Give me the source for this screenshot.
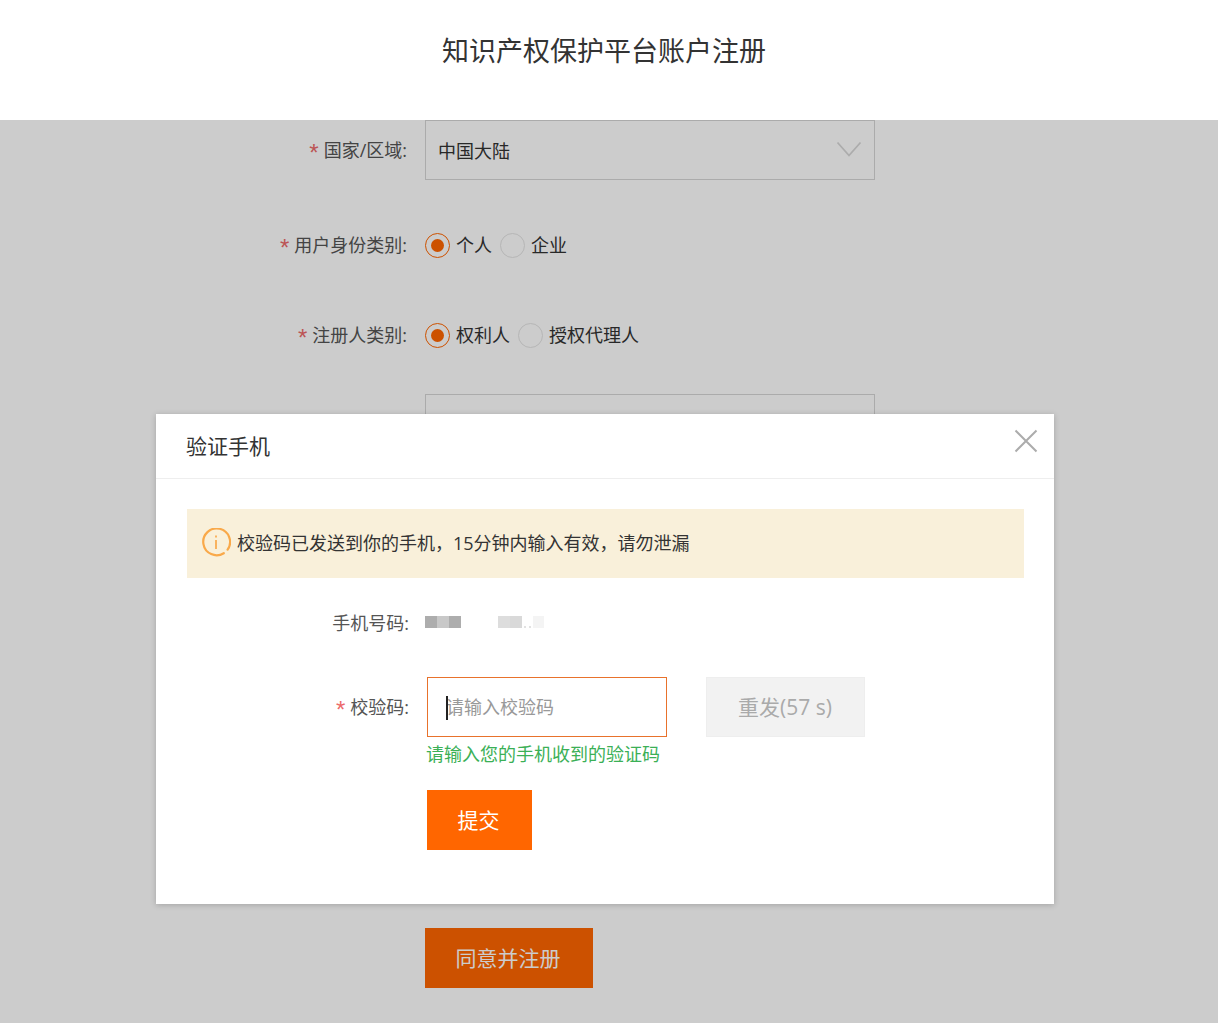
<div class="page">
  <header class="top"><h1>知识产权保护平台账户注册</h1></header>

  <form class="form">
    <div class="row">
      <div class="label"><i>*</i>国家/区域:</div>
      <div class="select">
        <span>中国大陆</span>
        <svg width="26" height="16" viewBox="0 0 26 16" fill="none"><path d="M1.5 1.5 13 14.5 24.5 1.5" stroke="#d8d8d8" stroke-width="1.8"/></svg>
      </div>
    </div>
    <div class="row second">
      <div class="label"><i>*</i>用户身份类别:</div>
      <div class="radios">
        <span class="radio on"></span><span class="opt">个人</span>
        <span class="radio"></span><span class="opt">企业</span>
      </div>
    </div>
    <div class="row">
      <div class="label"><i>*</i>注册人类别:</div>
      <div class="radios">
        <span class="radio on"></span><span class="opt">权利人</span>
        <span class="radio"></span><span class="opt">授权代理人</span>
      </div>
    </div>
    <div class="row fourth">
      <div class="label"></div>
      <div class="select"></div>
    </div>
    <div class="row agree">
      <div class="label"></div>
      <button type="button" class="agree-btn">同意并注册</button>
    </div>
  </form>

  <div class="mask"></div>

  <section class="modal">
    <div class="modal-head">
      <h2>验证手机</h2>
      <svg class="close" width="24" height="24" viewBox="0 0 24 24" fill="none"><path d="M1.5 1.5 22.5 22.5M22.5 1.5 1.5 22.5" stroke="#acacac" stroke-width="2"/></svg>
    </div>
    <div class="modal-body">
      <div class="alert">
        <svg width="30" height="30" viewBox="0 0 30 30" fill="none">
          <path d="M22.8 25.2A13.4 13.4 0 1 1 26.6 21.6" stroke="#f9a94a" stroke-width="2.2" stroke-linecap="round"/>
          <path d="M15 12V21M15 7.5V9.5" stroke="#f9a94a" stroke-width="1.7"/>
        </svg>
        <span>校验码已发送到你的手机，15分钟内输入有效，请勿泄漏</span>
      </div>

      <div class="m-row phone">
        <div class="m-label">手机号码:</div>
        <svg class="blur" width="120" height="12" viewBox="0 0 120 12">
          <rect x="0" width="12" height="12" fill="#adadad"/>
          <rect x="12" width="12" height="12" fill="#c8c8c8"/>
          <rect x="24" width="12" height="12" fill="#adadad"/>
          <rect x="73" width="12" height="12" fill="#dddddd"/>
          <rect x="85" width="12" height="12" fill="#d9d9d9"/>
          <rect x="99" y="10" width="2" height="2" fill="#e2e2e2"/>
          <rect x="104" y="10" width="2" height="2" fill="#e2e2e2"/>
          <rect x="108" width="11" height="12" fill="#f4f4f4"/>
        </svg>
      </div>

      <div class="m-row code">
        <div class="m-label"><i>*</i>校验码:</div>
        <div class="input"><b class="caret"></b>请输入校验码</div>
        <div class="resend">重发(57 s)</div>
      </div>
      <div class="hint">请输入您的手机收到的验证码</div>
      <button type="button" class="submit">提交</button>
    </div>
  </section>
</div>

<style>
  :global(body) {
    margin: 0;
    background: #fff;
  }
  .page {
    position: relative;
    height: 1023px;
    overflow: hidden;
    font-family: "Open Sans", "Noto Sans CJK SC", sans-serif;
    font-size: 18px;
    font-weight: 400;
    color: #333;
  }
  .top {
    height: 120px;
    position: relative;
    z-index: 2;
    background: #fff;
    padding-right: 10px;
    box-sizing: border-box;
  }
  h1 {
    margin: 0;
    padding-top: 31px;
    font-size: 27px;
    line-height: 40px;
    font-weight: 400;
    text-align: center;
  }
  .row {
    display: flex;
    align-items: center;
    gap: 17px;
    min-height: 60px;
    margin-bottom: 30px;
  }
  .row.second {
    margin-top: 35px;
  }
  .row.fourth {
    margin-top: -1px;
  }
  .row.agree {
    margin-top: 474px;
  }
  .label {
    box-sizing: border-box;
    width: 408px;
    padding-right: 1px;
    line-height: 24px;
    text-align: right;
    color: #555;
  }
  i {
    font-family: "Liberation Sans", sans-serif;
    font-style: normal;
    font-size: 24px;
    line-height: 20px;
    vertical-align: -4px;
    color: #ec6a6a;
    margin-right: 5px;
  }
  .select {
    box-sizing: border-box;
    width: 450px;
    height: 60px;
    border: 1px solid #d6d6d6;
    padding: 0 12px 0 12px;
    display: flex;
    align-items: center;
    justify-content: space-between;
  }
  .select svg {
    margin-top: -3px;
  }
  .radios {
    display: flex;
    align-items: center;
    line-height: 24px;
  }
  .radio {
    box-sizing: border-box;
    width: 25px;
    height: 25px;
    border-radius: 50%;
    border: 1px solid #e4e4e4;
    display: flex;
    align-items: center;
    justify-content: center;
  }
  .radio.on {
    border-color: #ff6600;
  }
  .radio.on::after {
    content: "";
    width: 13px;
    height: 13px;
    border-radius: 50%;
    background: #ff6600;
  }
  .opt {
    margin: 0 8px 0 6px;
  }
  .agree-btn {
    width: 168px;
    height: 60px;
    border: 0;
    padding: 0 2px 2px 0;
    background: #ff6600;
    color: #fff;
    font: inherit;
    font-size: 21px;
  }
  .mask {
    position: absolute;
    inset: 120px 0 0 0;
    background: rgba(0, 0, 0, 0.2);
  }
  .modal {
    position: absolute;
    left: 156px;
    top: 414px;
    width: 898px;
    height: 490px;
    background: #fff;
    box-shadow: 0 1px 6px rgba(0, 0, 0, 0.2);
  }
  .modal-head {
    position: relative;
    border-bottom: 1px solid #eee;
    padding: 16px 30px 0;
    height: 48px;
  }
  h2 {
    margin: 0;
    font-size: 21px;
    line-height: 32px;
    font-weight: 400;
  }
  .close {
    position: absolute;
    right: 16px;
    top: 15px;
  }
  .modal-body {
    padding: 30px 30px 0 31px;
  }
  .alert {
    height: 69px;
    background: #f9f0da;
    padding: 0 0 4px 14px;
    box-sizing: border-box;
    display: flex;
    align-items: center;
    gap: 6px;
  }
  .alert svg {
    margin-top: 3px;
  }
  .m-row {
    display: flex;
    align-items: center;
  }
  .m-label {
    width: 222px;
    line-height: 24px;
    text-align: right;
    color: #555;
  }
  .phone {
    margin-top: 33px;
    height: 24px;
  }
  .blur {
    margin-left: 16px;
    margin-top: -3px;
  }
  .code {
    margin-top: 42px;
  }
  .input {
    position: relative;
    box-sizing: border-box;
    width: 240px;
    height: 60px;
    margin-left: 18px;
    border: 1px solid #e8722c;
    padding: 0 0 2px 18px;
    display: flex;
    align-items: center;
    color: #999;
  }
  .caret {
    position: absolute;
    left: 18px;
    top: 18px;
    width: 2px;
    height: 24px;
    background: #222;
  }
  .resend {
    box-sizing: border-box;
    width: 159px;
    height: 60px;
    margin-left: 39px;
    padding: 0 1px 2px 0;
    background: #f2f2f2;
    border: 1px solid #eee;
    color: #aaa;
    font-size: 21px;
    display: flex;
    align-items: center;
    justify-content: center;
  }
  .hint {
    margin: 5px 0 0 239px;
    line-height: 24px;
    color: #3bb056;
  }
  .submit {
    display: block;
    width: 105px;
    height: 60px;
    margin: 24px 0 0 240px;
    border: 0;
    padding: 0 2px 2px 0;
    background: #ff6600;
    color: #fff;
    font: inherit;
    font-size: 21px;
  }
</style>
